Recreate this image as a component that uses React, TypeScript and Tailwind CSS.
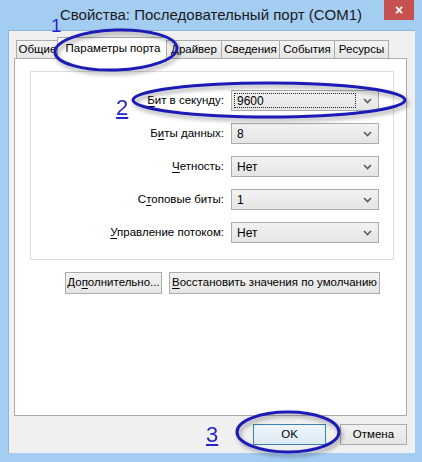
import React from "react";

const ui = { fontFamily: '"Liberation Sans", Arial, sans-serif' };

/** Small combo chevron */
function Chevron() {
  return (
    <svg width="9" height="6" viewBox="0 0 9 6" className="shrink-0">
      <path d="M1 1 L4.5 4.5 L8 1" fill="none" stroke="#5a5a5a" strokeWidth="1.6" />
    </svg>
  );
}

function Combo({ value, focused }: { value: string; focused?: boolean }) {
  return (
    <div className="w-[148px] h-[21px] flex items-center border border-[#acacac] bg-gradient-to-b from-[#f2f2f2] to-[#e5e5e5] pl-[2px] pr-[6px]">
      <div
        className={`flex-1 h-[15px] flex items-center pl-[2px] text-[12px] text-black ${
          focused ? "border border-dotted border-[#222]" : "border border-transparent"
        }`}
      >
        {value}
      </div>
      <div className="w-[16px] flex justify-end">
        <Chevron />
      </div>
    </div>
  );
}

function Row({ u, rest, pre, value, focused }: { pre?: string; u: string; rest: string; value: string; focused?: boolean }) {
  return (
    <div className="flex items-center h-[21px]">
      <div className="w-[200px] text-right pr-[7px] text-[11.5px] text-black whitespace-nowrap">
        {pre}
        <span className="underline underline-offset-2">{u}</span>
        {rest}
      </div>
      <Combo value={value} focused={focused} />
    </div>
  );
}

export default function App() {
  const tabs = [
    { t: "Общие", w: "w-[43px]" },
    { t: "Параметры порта", w: "w-[112px]" },
    { t: "Драйвер", w: "w-[56px]" },
    { t: "Сведения", w: "w-[59px]" },
    { t: "События", w: "w-[56px]" },
    { t: "Ресурсы", w: "w-[55px]" },
  ];

  return (
    <div className="relative w-[422px] h-[462px] bg-[#a4cdf2] flex flex-col overflow-hidden" style={ui}>
      {/* Title bar */}
      <div className="h-[30px] flex items-start shrink-0">
        <div className="w-[38px]" />
        <div className="flex-1 text-center text-[15px] text-[#1a1a1a] pt-[6px] leading-[18px] whitespace-nowrap">
          Свойства: Последовательный порт (COM1)
        </div>
        <div className="w-[30px] h-[20px] bg-[#c75050] flex items-center justify-center text-white text-[14px] font-bold leading-none">
          ×
        </div>
        <div className="w-[8px]" />
      </div>

      {/* Client area */}
      <div className="ml-[8px] w-[407px] h-[423px] bg-[#f0f0f0] border-t border-l border-[#8fb6da] flex flex-col">
        {/* Tabs */}
        <div className="h-[18px] mt-[9px] ml-[7px] flex items-end relative z-10">
          {tabs.map((tab, i) =>
            i === 1 ? (
              <div
                key={tab.t}
                className={`${tab.w} h-[22px] -mx-[2px] mb-[-1px] bg-white border border-b-0 border-[#acacac] flex items-center justify-center text-[11.5px] text-black whitespace-nowrap shrink-0`}
              >
                {tab.t}
              </div>
            ) : (
              <div
                key={tab.t}
                className={`${tab.w} h-[18px] bg-gradient-to-b from-[#f3f3f3] to-[#e6e6e6] border border-b-0 border-[#acacac] -ml-px first:ml-0 flex items-center justify-center text-[11.5px] text-black whitespace-nowrap shrink-0`}
              >
                {tab.t}
              </div>
            )
          )}
        </div>

        {/* Tab page */}
        <div className="ml-[5px] w-[393px] h-[358px] bg-white border border-[#acacac] flex flex-col">
          {/* Group box */}
          <div className="ml-[15px] mt-[12px] w-[364px] h-[189px] border border-[#dcdcdc] flex flex-col gap-[12px] pt-[18px]">
            <Row u="Б" rest="ит в секунду:" value="9600" focused />
            <Row pre="Б" u="и" rest="ты данных:" value="8" />
            <Row u="Ч" rest="етность:" value="Нет" />
            <Row pre="С" u="т" rest="оповые биты:" value="1" />
            <Row u="У" rest="правление потоком:" value="Нет" />
          </div>

          <div className="flex justify-end gap-[7px] mt-[12px] w-[350px] ml-[15px]">
            <div className="h-[22px] w-[97px] border border-[#acacac] bg-gradient-to-b from-[#f2f2f2] to-[#e5e5e5] flex items-center justify-center text-[11.5px] text-black whitespace-nowrap">
              До<span className="underline underline-offset-2">п</span>олнительно...
            </div>
            <div className="h-[22px] w-[211px] border border-[#acacac] bg-gradient-to-b from-[#f2f2f2] to-[#e5e5e5] flex items-center justify-center text-[11.5px] text-black whitespace-nowrap">
              <span className="underline underline-offset-2">В</span>осстановить значения по умолчанию
            </div>
          </div>
        </div>

        {/* Bottom buttons */}
        <div className="flex justify-end gap-[14px] mt-[8px] pr-[8px]">
          <div className="h-[21px] w-[73px] border border-[#3c7fb1] bg-gradient-to-b from-[#eef5fb] to-[#dcebf7] flex items-center justify-center text-[11.5px] text-black">
            OK
          </div>
          <div className="h-[21px] w-[67px] border border-[#acacac] bg-gradient-to-b from-[#f2f2f2] to-[#e5e5e5] flex items-center justify-center text-[11.5px] text-black">
            Отмена
          </div>
        </div>
      </div>

      {/* Annotations overlay */}
      <svg className="absolute inset-0 pointer-events-none z-20" width="422" height="462" viewBox="0 0 422 462">
        <defs>
          <filter id="sh" x="-20%" y="-40%" width="140%" height="180%">
            <feDropShadow dx="2" dy="3" stdDeviation="2" floodColor="#000" floodOpacity="0.35" />
          </filter>
        </defs>
        <g fill="none" stroke="#1c1cb4" strokeWidth="3" filter="url(#sh)">
          <ellipse cx="116" cy="50" rx="61" ry="20" transform="rotate(-2 116 50)" />
          <ellipse cx="269" cy="100" rx="136" ry="17" />
          <ellipse cx="288" cy="432" rx="51" ry="20" />
        </g>
      </svg>
      <div className="absolute left-[51px] top-[16px] z-20 text-[19px] leading-none text-[#2626c8]">1</div>
      <div className="absolute left-[116px] top-[97px] z-20 text-[22px] leading-none text-[#2626c8] underline underline-offset-2">2</div>
      <div className="absolute left-[206px] top-[424px] z-20 text-[22px] leading-none text-[#2626c8] underline underline-offset-2">3</div>
    </div>
  );
}
